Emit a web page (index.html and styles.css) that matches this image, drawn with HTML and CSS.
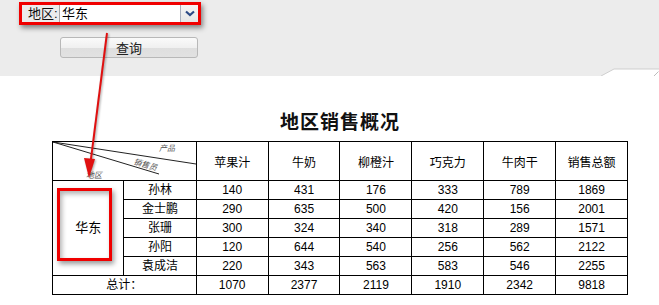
FILE: index.html
```html
<!DOCTYPE html>
<html lang="zh">
<head>
<meta charset="utf-8">
<title>地区销售概况</title>
<link rel="stylesheet" href="styles.css">
</head>
<body>
<div class="page">
  <div class="toolbar">
    <div class="filter">
      <span class="filter-label">地区:</span>
      <div class="select">
        <span class="select-value">华东</span>
        <span class="select-btn">
          <svg width="10" height="7" viewBox="0 0 10 7"><path d="M1 1.5 L5 5 L9 1.5" fill="none" stroke="#2c4a86" stroke-width="2.2"/></svg>
        </span>
      </div>
    </div>
    <button class="query">查询</button>
    <svg class="tab" width="58" height="8" viewBox="0 0 58 8"><polygon points="0,8 13,1 58,1 58,8" fill="#fff"/><polyline points="0,8 13,1 58,1" fill="none" stroke="#cfcfcf" stroke-width="1"/><line x1="53" y1="8" x2="57.5" y2="3.5" stroke="#bdbdbd" stroke-width="1"/></svg>
  </div>

  <div class="report">
    <h1 class="title">地区销售概况</h1>
    <table class="sales">
      <colgroup>
        <col class="c-region"><col class="c-name">
        <col class="c-num"><col class="c-num"><col class="c-num"><col class="c-num"><col class="c-num"><col class="c-num">
      </colgroup>
      <thead>
        <tr class="head-row">
          <th colspan="2" class="corner">
            <svg class="corner-svg" width="143" height="39" viewBox="0 0 143 39">
              <line x1="0" y1="0" x2="143" y2="22" stroke="#222" stroke-width="1"/>
              <line x1="0" y1="0" x2="106" y2="32" stroke="#222" stroke-width="1"/>
              <text x="106" y="9" class="corner-text">产品</text>
              <text x="80" y="22" class="corner-text" transform="rotate(16 80 22)">销售员</text>
              <text x="33" y="36" class="corner-text">地区</text>
            </svg>
          </th>
          <th>苹果汁</th><th>牛奶</th><th>柳橙汁</th><th>巧克力</th><th>牛肉干</th><th>销售总额</th>
        </tr>
      </thead>
      <tbody>
        <tr><td rowspan="5" class="region">华东</td><td>孙林</td><td>140</td><td>431</td><td>176</td><td>333</td><td>789</td><td>1869</td></tr>
        <tr><td>金士鹏</td><td>290</td><td>635</td><td>500</td><td>420</td><td>156</td><td>2001</td></tr>
        <tr><td>张珊</td><td>300</td><td>324</td><td>340</td><td>318</td><td>289</td><td>1571</td></tr>
        <tr><td>孙阳</td><td>120</td><td>644</td><td>540</td><td>256</td><td>562</td><td>2122</td></tr>
        <tr><td>袁成洁</td><td>220</td><td>343</td><td>563</td><td>583</td><td>546</td><td>2255</td></tr>
        <tr><td colspan="2">总计：</td><td>1070</td><td>2377</td><td>2119</td><td>1910</td><td>2342</td><td>9818</td></tr>
      </tbody>
    </table>
  </div>

  <div class="callout"></div>
  <svg class="arrow" width="659" height="305" viewBox="0 0 659 305">
    <line x1="107" y1="33" x2="90.6" y2="162" stroke="#e01010" stroke-width="2"/>
    <polygon points="89,178 84,158 95,159" fill="#e01010"/>
  </svg>
</div>
</body>
</html>
```

FILE: styles.css
```css
html, body {
  margin: 0;
  padding: 0;
  background: #fff;
}
.page {
  position: relative;
  width: 659px;
  height: 305px;
  overflow: hidden;
  font-family: "Liberation Sans", "Noto Sans CJK SC", sans-serif;
  color: #000;
}
.toolbar {
  position: relative;
  height: 76px;
  box-sizing: border-box;
  background: #ececec;
  padding: 2px 0 0 19px;
}
.filter {
  display: flex;
  align-items: stretch;
  width: 182px;
  height: 23px;
  box-sizing: border-box;
  border: 3px solid #f00000;
  background: #ececec;
  box-shadow: 2px 3px 5px rgba(0, 0, 0, 0.45);
}
.filter-label {
  font-size: 13px;
  line-height: 17px;
  padding-left: 6px;
  width: 31px;
  color: #111;
}
.select {
  flex: 1;
  display: flex;
  background: #fff;
  border-left: 1px solid #a6a6a6;
}
.select-value {
  flex: 1;
  font-size: 13px;
  line-height: 17px;
  padding-left: 2px;
}
.select-btn {
  width: 17px;
  display: flex;
  align-items: center;
  justify-content: center;
  border-left: 1px solid #a9afbd;
  background: linear-gradient(#f6f6f6, #e6e6e6);
}
.query {
  display: block;
  margin: 12px 0 0 41px;
  width: 138px;
  height: 21px;
  padding: 0;
  border: 1px solid #b8b8b8;
  border-radius: 3px;
  background: linear-gradient(#fafafa 0%, #f0f0f0 50%, #dedede 52%, #e2e2e2 100%);
  font-family: "Noto Sans CJK SC", sans-serif;
  font-size: 13px;
  line-height: 19px;
  color: #222;
}
.tab {
  position: absolute;
  right: 0;
  bottom: 0;
  display: block;
}
.report {
  padding: 33px 0 0 52px;
  width: 576px;
}
.title {
  margin: 0 0 8px 0;
  text-align: center;
  font-family: "Noto Sans CJK SC", serif;
  font-weight: 700;
  font-size: 19px;
  line-height: 24px;
  letter-spacing: 1px;
  color: #111;
}
.sales {
  width: 576px;
  border-collapse: collapse;
  table-layout: fixed;
  font-size: 12px;
}
.c-region { width: 71px; }
.c-name { width: 72px; }
.c-num { width: 71.5px; }
.sales th, .sales td {
  border: 1px solid #000;
  padding: 0;
  text-align: center;
  font-weight: normal;
  vertical-align: middle;
}
.sales td {
  height: 18px;
  line-height: 16px;
}
.head-row th {
  height: 38px;
}
.corner {
  position: relative;
}
.corner-svg {
  position: absolute;
  left: 0;
  top: 0;
  display: block;
}
.corner-text {
  font-family: "Noto Sans CJK SC", serif;
  font-size: 8px;
  font-style: italic;
  fill: #555;
}
.region {
  font-size: 13px;
}
.callout {
  position: absolute;
  left: 57px;
  top: 188px;
  width: 55px;
  height: 73px;
  box-sizing: border-box;
  border: 3px solid #f00000;
  box-shadow: 2px 3px 5px rgba(0, 0, 0, 0.4), inset 2px 3px 5px rgba(0, 0, 0, 0.3);
}
.arrow {
  position: absolute;
  left: 0;
  top: 0;
  pointer-events: none;
  filter: drop-shadow(1px 1px 1px rgba(0, 0, 0, 0.35));
}
```
